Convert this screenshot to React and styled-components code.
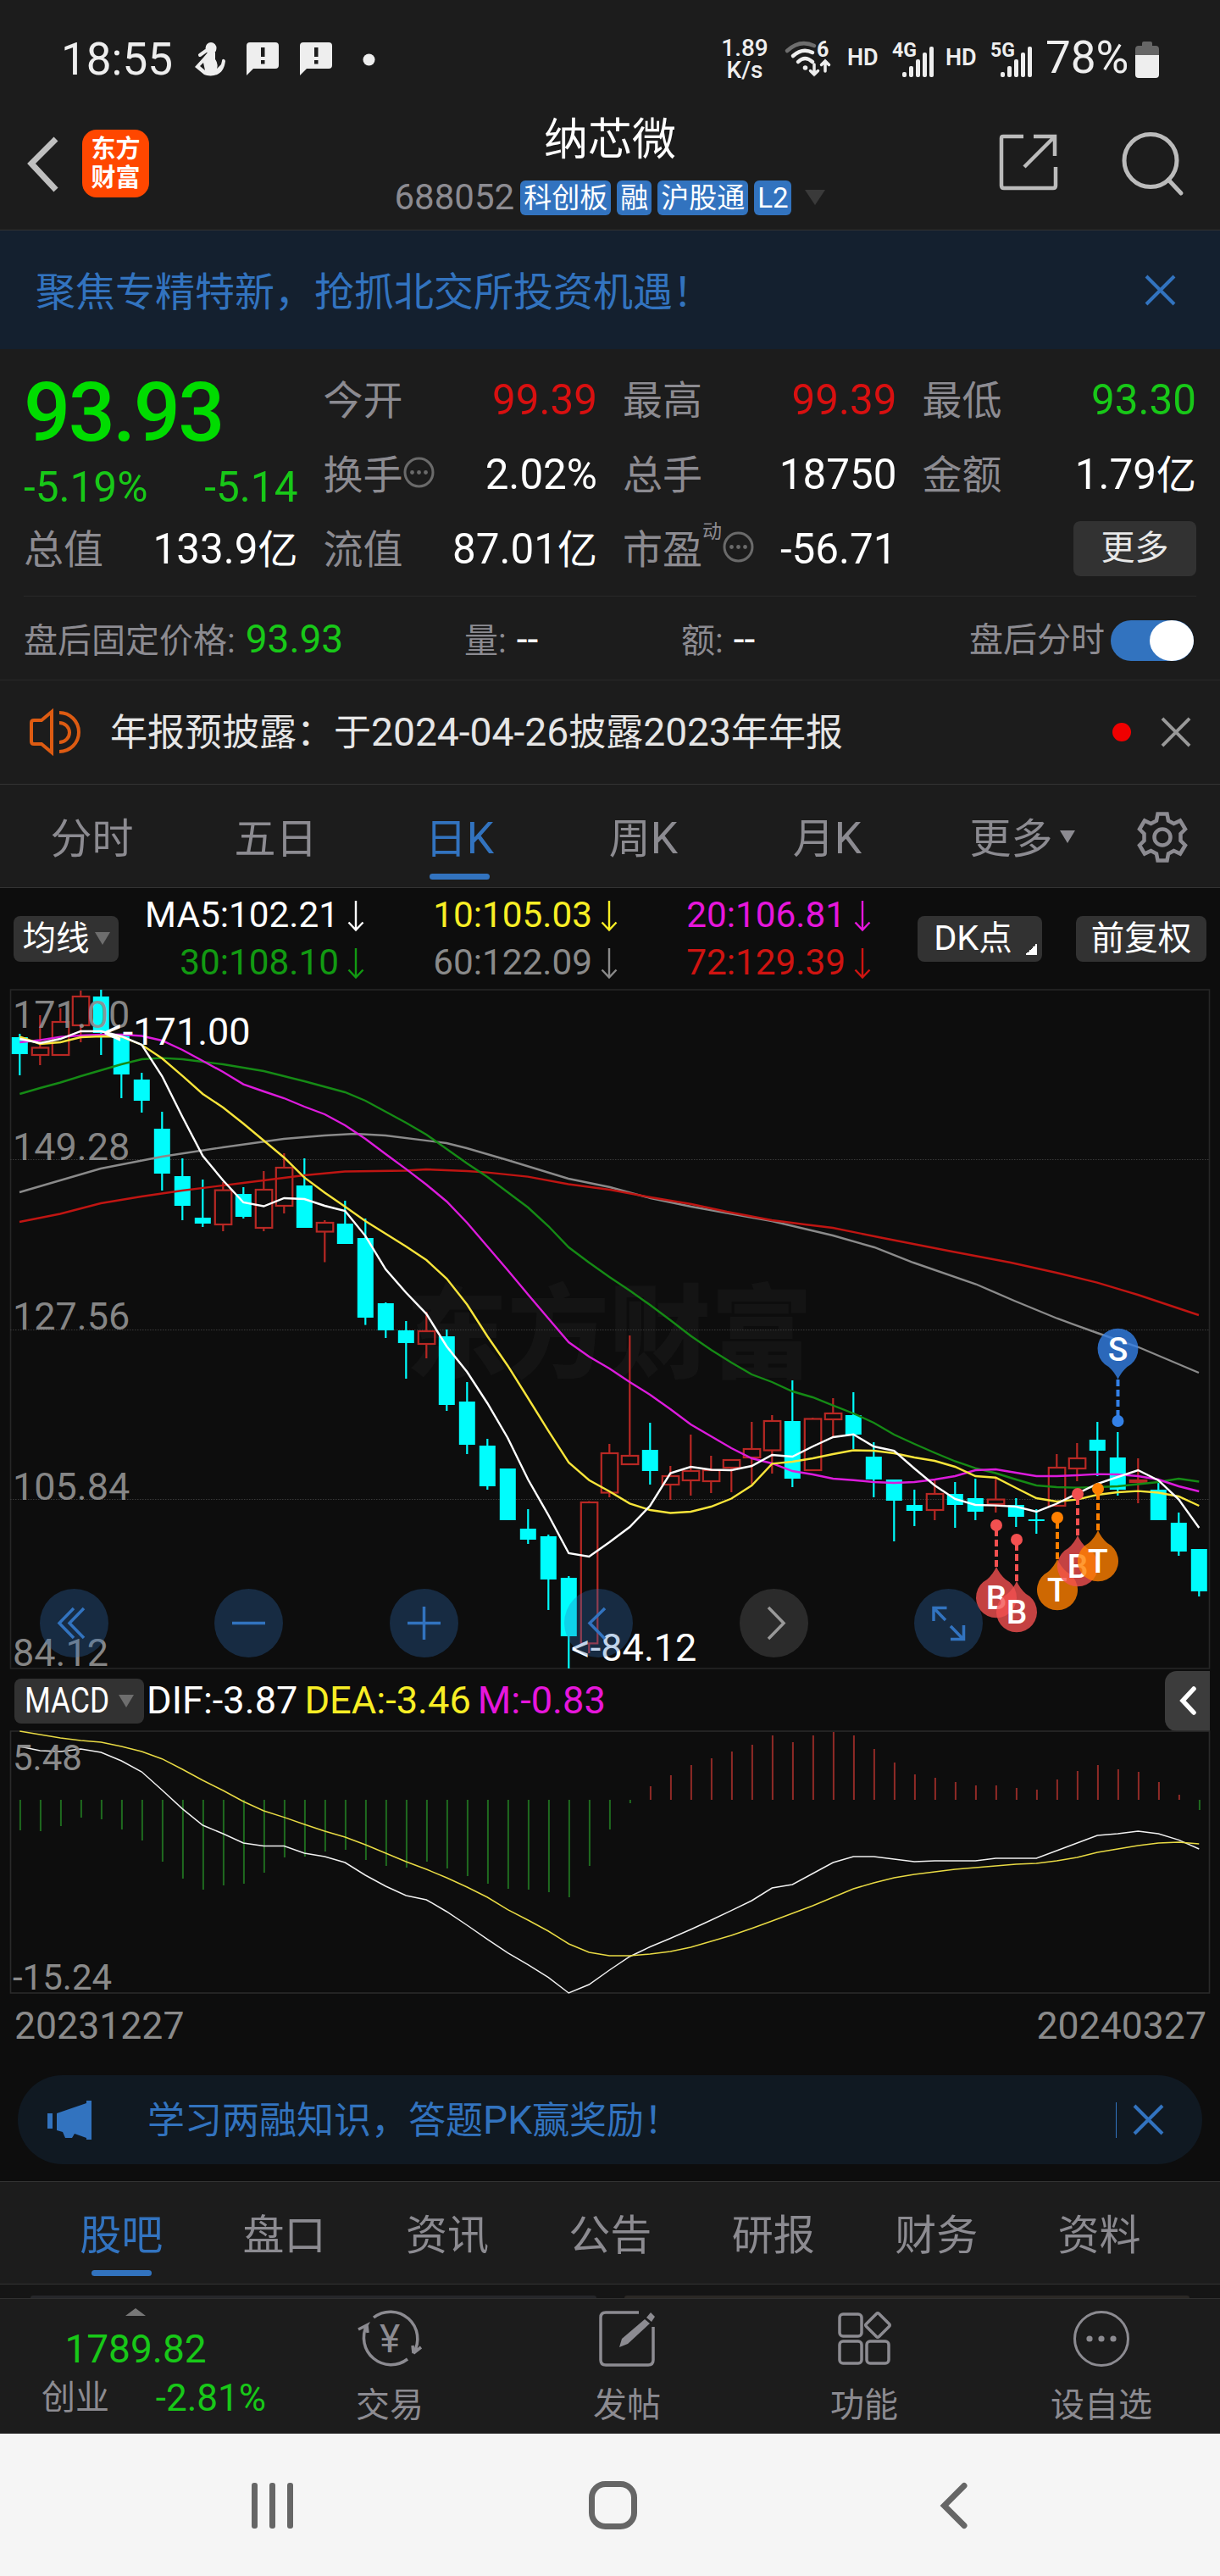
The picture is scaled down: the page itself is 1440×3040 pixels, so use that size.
import React, { useState } from "react";
import styled, { createGlobalStyle, css } from "styled-components";

const BLUE = "#3273bf";
const GREEN = "#18c818";
const RED = "#d81010";
const GREY = "#8c8b91";

const GlobalStyle = createGlobalStyle`
  * {
    box-sizing: border-box;
  }
  body {
    margin: 0;
    background: #0d0d0d;
    font-family: Roboto, "Noto Sans CJK SC", sans-serif;
    line-height: 1.2;
  }
  svg {
    display: block;
    flex: none;
    overflow: visible;
  }
`;

const Screen = styled.div`
  width: 1440px;
  height: 3040px;
  overflow: hidden;
  display: flex;
  flex-direction: column;
  background: #0d0d0d;
  color: #fff;
  white-space: nowrap;

  > * {
    flex-shrink: 0;
  }
`;

/* Latin runs are set slightly larger than the Chinese text beside them */
const Latin = styled.span`
  font-size: 1.05em;
  line-height: 1;
`;

const Mixed = ({ children }) =>
  String(children)
    .split(/([\x21-\x7e]+)/)
    .filter(Boolean)
    .map((part, i) =>
      /^[\x21-\x7e]/.test(part) ? <Latin key={i}>{part}</Latin> : part
    );

// ---------- status bar ----------

const StatusBar = styled.div`
  height: 136px;
  background: #1c1c1c;
  color: #eee;
  display: flex;
  align-items: center;
  justify-content: space-between;
  padding: 4px 72px 0 72px;
`;

const StatusGroup = styled.div`
  display: flex;
  align-items: center;
`;

const Clock = styled.div`
  width: 158px;
  font-size: 53px;
  line-height: 60px;
`;

const StatusSvg = styled.svg`
  margin-left: ${(props) => props.$gap || 0}px;
`;

const NetSpeed = styled.div`
  width: 60px;
  text-align: center;
  font-size: 28px;
  line-height: 26px;
  font-weight: 500;
`;

const Hd = styled.div`
  width: 37px;
  margin-left: ${(props) => props.$gap}px;
  font-size: 27px;
  line-height: 30px;
  font-weight: 600;
  padding-bottom: 4px;
`;

const Percent = styled.div`
  width: 106px;
  margin-left: 15px;
  font-size: 53px;
  line-height: 60px;
  padding-bottom: 4px;
`;

const Bubble = ({ gap }) => (
  <StatusSvg $gap={gap} width="38" height="40" viewBox="0 0 38 40">
    <path
      d="M4 0h30a4 4 0 0 1 4 4v23a4 4 0 0 1-4 4H8l-8 8V4a4 4 0 0 1 4-4z"
      fill="#eee"
    />
    <rect x="17" y="6" width="4.5" height="11" fill="#1c1c1c" />
    <rect x="17" y="21" width="4.5" height="4.5" fill="#1c1c1c" />
  </StatusSvg>
);

const Signal = ({ label, gap }) => (
  <StatusSvg $gap={gap} width="50" height="44" viewBox="0 0 50 44">
    <text
      x="0"
      y="19"
      fontSize="23"
      fontWeight="700"
      fill="#eee"
      textLength="29"
      lengthAdjust="spacingAndGlyphs"
    >
      {label}
    </text>
    {[37, 30, 22, 14, 7].map((top, i) => (
      <rect
        key={top}
        x={12 + i * 8}
        y={top}
        width="5"
        height={43 - top}
        rx="2"
        fill="#eee"
      />
    ))}
  </StatusSvg>
);

// ---------- header ----------

const Header = styled.div`
  height: 136px;
  background: #1c1c1c;
  border-bottom: 1.5px solid #333;
  display: flex;
  justify-content: space-between;
  padding: 0 42px 0 32px;
`;

const HeaderSide = styled.div`
  width: ${(props) => props.$width}px;
  display: flex;
  padding-top: ${(props) => props.$top}px;
  gap: ${(props) => props.$gap}px;
  justify-content: ${(props) => props.$align || "flex-start"};
`;

const Logo = styled.div`
  width: 79px;
  height: 80px;
  border-radius: 17px;
  background: #ff4700;
  font-size: 29px;
  line-height: 34px;
  font-weight: 700;
  text-align: center;
  padding-top: 6px;
`;

const TitleBlock = styled.div`
  display: flex;
  flex-direction: column;
  align-items: center;
`;

const StockName = styled.div`
  font-size: 52px;
  line-height: 60px;
`;

const CodeRow = styled.div`
  display: flex;
  align-items: center;
  gap: 7px;
  margin-top: 16px;
`;

const Code = styled.span`
  font-size: 42px;
  line-height: 42px;
  color: ${GREY};
`;

const Badge = styled.span`
  height: 41px;
  padding: 0 4px;
  border-radius: 6px;
  background: ${BLUE};
  font-size: 33px;
  line-height: 41px;
`;

const Triangle = styled.i`
  flex: none;
  width: 0;
  height: 0;
  margin-left: ${(props) => props.$gap || 0}px;
  border-left: ${(props) => props.$half}px solid transparent;
  border-right: ${(props) => props.$half}px solid transparent;
  ${(props) =>
    props.$up
      ? css`
          border-bottom: ${props.$h}px solid ${props.$color};
        `
      : css`
          border-top: ${props.$h}px solid ${props.$color};
        `}
`;

// ---------- banner ----------

const Banner = styled.div`
  height: 140px;
  background: #14202f;
  color: ${BLUE};
  display: flex;
  align-items: center;
  justify-content: space-between;
  padding: 0 52px 0 42px;
  font-size: 47px;
`;

const BannerText = styled.div`
  padding-top: 6px;
`;

const Cross = ({ size = 37, color, width = 4 }) => (
  <svg width={size} height={size} viewBox="0 0 37 37">
    <path
      d="M2 2l33 33M35 2L2 35"
      stroke={color}
      strokeWidth={width}
      fill="none"
    />
  </svg>
);

// ---------- quote ----------

const Quote = styled.div`
  height: 292px;
  background: #1c1c1c;
  padding: 17px 28px 0;
`;

const QuoteGrid = styled.div`
  height: 275px;
  display: grid;
  grid-template-columns: repeat(4, 1fr);
  grid-template-rows: repeat(3, 88px);
  column-gap: 30px;
  border-bottom: 1.5px solid #292929;
`;

const PriceBlock = styled.div`
  grid-row: 1 / 3;
  color: ${GREEN};
`;

const Price = styled.div`
  font-size: 97px;
  line-height: 116px;
  font-weight: 500;
  letter-spacing: -2.5px;
  color: #00dc00;
`;

const Change = styled.div`
  display: flex;
  justify-content: space-between;
  font-size: 49.5px;
  line-height: 60px;
`;

const Cell = styled.div`
  display: flex;
  align-items: center;
  justify-content: ${(props) => props.$align || "space-between"};
`;

const Label = styled.div`
  display: flex;
  align-items: center;
  font-size: 47px;
  color: ${GREY};
`;

const Value = styled.div`
  font-size: 47px;
  color: ${(props) => props.$color || "#fff"};
`;

const Dynamic = styled.span`
  align-self: flex-start;
  margin: -7px 1px 0 0;
  font-size: 23px;
`;

const MoreButton = styled.button`
  width: 145px;
  height: 65px;
  margin-bottom: 4px;
  padding: 0;
  border: 0;
  border-radius: 8px;
  background: #323232;
  color: #e8e8e8;
  font: inherit;
  font-size: 40px;
  line-height: 62px;
`;

const InfoDots = () => (
  <svg width="37" height="37" viewBox="0 3 37 37">
    <circle
      cx="18.5"
      cy="18.5"
      r="16.5"
      stroke="#6a6a6a"
      strokeWidth="3"
      fill="none"
    />
    <circle cx="10.5" cy="18.5" r="2.4" fill="#6a6a6a" />
    <circle cx="18.5" cy="18.5" r="2.4" fill="#6a6a6a" />
    <circle cx="26.5" cy="18.5" r="2.4" fill="#6a6a6a" />
  </svg>
);

// ---------- after hours and notice ----------

const AfterHours = styled.div`
  height: 99px;
  background: #1c1c1c;
  border-bottom: 1.5px solid #292929;
  display: grid;
  grid-template-columns: 520px 256px 1fr auto;
  align-items: center;
  padding: 6px 31px 0 28px;
  font-size: 40px;
  color: ${GREY};
`;

const Figure = styled.span`
  margin-left: 12px;
  font-size: 46px;
  line-height: 1;
  color: ${(props) => props.$color || "#fff"};
`;

const SwitchRow = styled.div`
  display: flex;
  align-items: center;
  gap: 7px;
`;

const Switch = styled.button`
  width: 98px;
  height: 48px;
  padding: 0;
  border: 0;
  border-radius: 24px;
  background: ${(props) => (props.$on ? BLUE : "#444")};
  display: flex;
  justify-content: ${(props) => (props.$on ? "flex-end" : "flex-start")};
`;

const Knob = styled.span`
  width: 52px;
  height: 48px;
  border-radius: 50%;
  background: #fff;
`;

const Notice = styled.div`
  height: 123px;
  background: #1c1c1c;
  border-bottom: 1.5px solid #333;
  display: flex;
  align-items: center;
  padding: 0 34px 0 34px;
`;

const NoticeText = styled.div`
  flex: 1;
  margin-left: 34px;
  padding-top: 2px;
  font-size: 44px;
  color: #e6e6e6;
`;

const RedDot = styled.span`
  width: 22px;
  height: 22px;
  margin-right: 35px;
  border-radius: 50%;
  background: #f00000;
`;

// ---------- tabs ----------

const Tabs = styled.div`
  height: 122px;
  background: #1c1c1c;
  border-bottom: 1.5px solid #333;
  ${(props) => props.$lined && "border-top: 1.5px solid #333;"}
  display: flex;
  padding-left: ${(props) => props.$pad || 0}px;
`;

const Tab = styled.div`
  width: ${(props) => props.$width}px;
  padding-top: ${(props) => props.$top}px;
  display: flex;
  flex-direction: column;
  align-items: center;
  font-size: 49px;
  line-height: 60px;
  color: ${(props) => (props.$active ? BLUE : GREY)};

  &::after {
    content: "";
    width: 71px;
    height: 7px;
    border-radius: 4px;
    margin-top: 10px;
    background: ${(props) => (props.$active ? BLUE : "transparent")};
  }
`;

const TabTail = styled.div`
  flex: 1;
  display: flex;
  align-items: center;
  justify-content: space-between;
  padding: 2px 38px 0 0;
`;

// ---------- indicator rows ----------

const MaRow = styled.div`
  height: 119px;
  display: flex;
  align-items: center;
  padding: 0 16px;
`;

const Chip = styled.button`
  flex: none;
  width: ${(props) => props.$width}px;
  height: ${(props) => props.$height || 54}px;
  padding: 0;
  border: 0;
  border-radius: 8px;
  background: #323232;
  color: #fff;
  font: inherit;
  font-size: 39.5px;
  line-height: 50px;
  display: flex;
  align-items: center;
  justify-content: center;
`;

const MaGrid = styled.div`
  display: grid;
  grid-template-columns: 290px 299px 299px;
  grid-auto-rows: 56px;
  padding-top: 2px;
`;

const MaItem = styled.div`
  display: flex;
  align-items: center;
  justify-content: flex-end;
  gap: 10px;
  font-size: 42.3px;
  color: ${(props) => props.color};
`;

const ChipGroup = styled.div`
  flex: 1;
  display: flex;
  justify-content: flex-end;
  gap: 40px;
`;

const Corner = styled.i`
  width: 14px;
  height: 14px;
  align-self: flex-end;
  margin: 0 -13px 8px 15px;
  background: linear-gradient(135deg, transparent 50%, #fff 50%);
`;

const ChartBox = styled.div`
  position: relative;
  height: ${(props) => props.$height}px;
`;

/* chart controls float over the candles */
const Controls = styled.div`
  position: absolute;
  left: 47px;
  right: 280px;
  bottom: 14px;
  display: flex;
  justify-content: space-between;
`;

const RoundButton = styled.button`
  width: 81px;
  height: 81px;
  padding: 0;
  border: 0;
  border-radius: 50%;
  background: ${(props) =>
    props.$muted ? "rgba(90, 90, 90, 0.4)" : "rgba(47, 112, 190, 0.3)"};
  display: flex;
  align-items: center;
  justify-content: center;
`;

const MacdRow = styled.div`
  height: 72px;
  display: flex;
  align-items: center;
  padding: 2px 12px 0 17px;
`;

const Squeezed = styled.span`
  font-size: 42px;
  width: 102px;
  transform: scaleX(0.84);
  transform-origin: 0 50%;
`;

const MacdValue = styled.span`
  margin-left: ${(props) => props.$gap}px;
  font-size: 45.2px;
  color: ${(props) => props.color};
`;

const Collapse = styled.button`
  width: 53px;
  height: 71px;
  margin-left: auto;
  padding: 0;
  border: 0;
  border-radius: 14px 0 0 14px;
  background: #3c3c3c;
  display: flex;
  align-items: center;
  justify-content: center;
`;

const Dates = styled.div`
  height: 96px;
  display: flex;
  justify-content: space-between;
  padding: 12px 16px 0 17px;
  font-size: 44.6px;
  line-height: 52px;
  color: #8a8a8a;
`;

const Promo = styled.div`
  height: 105px;
  margin: 0 21px 20px;
  border-radius: 53px;
  background: #101922;
  color: ${BLUE};
  display: flex;
  align-items: center;
  padding: 0 45px 0 34px;
  font-size: 44px;
`;

const PromoText = styled.div`
  flex: 1;
  margin-left: 64px;
  padding-top: 3px;
`;

const Divider = styled.i`
  width: 1.5px;
  height: 42px;
  margin-right: 19px;
  background: ${BLUE};
`;

const Peek = styled.div`
  height: 17px;
  background: #151515;
  border-bottom: 1.5px solid #303030;
  display: flex;
  align-items: flex-end;
  gap: 33px;
  padding: 0 36px;
`;

const PeekCard = styled.div`
  flex: 1;
  height: 3px;
  border-radius: 10px 10px 0 0;
  background: ${(props) => props.color};
`;

// ---------- bottom bars ----------

const BottomBar = styled.div`
  height: 159px;
  background: #1c1c1c;
  display: flex;
`;

const IndexBox = styled.div`
  width: 320px;
  display: flex;
  flex-direction: column;
  align-items: center;
  padding-top: 11px;
  color: ${GREEN};
`;

const IndexValue = styled.div`
  font-size: 46px;
  line-height: 54px;
  margin-top: 12px;
`;

const IndexRow = styled.div`
  width: 100%;
  display: flex;
  justify-content: space-between;
  align-items: center;
  padding: 0 6px 0 49px;
  margin-top: 5px;
  font-size: 44px;
  line-height: 52px;
`;

const IndexName = styled.span`
  font-size: 40px;
  color: ${GREY};
`;

const NavItem = styled.div`
  width: 280px;
  display: flex;
  flex-direction: column;
  align-items: center;
  padding-top: 9px;
  font-size: 40px;
  line-height: 50px;
  color: ${GREY};

  svg {
    margin-bottom: 16px;
  }
`;

const SystemBar = styled.div`
  height: 168px;
  background: #f5f5f5;
  display: flex;
  align-items: center;
  justify-content: space-between;
  padding: 2px 298px 0 297px;
`;

const HomeIcon = styled.svg`
  margin-right: 10px;
`;

// ---------- chart data ----------

// [up, body top, body bottom, high, low] in plot units
const CANDLES = [
  [0, 1224, 1244, 1220, 1269],
  [1, 1236.5, 1245, 1198, 1257],
  [1, 1206, 1245, 1190, 1245],
  [1, 1176, 1210, 1169, 1230],
  [0, 1176, 1219, 1168, 1245],
  [0, 1222, 1268, 1222, 1296],
  [0, 1274, 1299, 1266, 1313],
  [0, 1332, 1385, 1312, 1405],
  [0, 1388, 1423, 1367, 1440],
  [0, 1437, 1444, 1392, 1448],
  [1, 1404.6, 1445, 1395, 1453],
  [0, 1409, 1436, 1401, 1438],
  [1, 1404, 1449, 1382, 1453],
  [1, 1378, 1423, 1361, 1432],
  [0, 1399, 1449, 1367, 1449],
  [1, 1443, 1453.5, 1440, 1489.6],
  [0, 1444, 1468, 1417, 1468],
  [0, 1461, 1555, 1438, 1563.6],
  [0, 1538, 1570, 1537, 1579],
  [0, 1570, 1585, 1559, 1627],
  [1, 1571, 1586, 1548, 1603],
  [0, 1577, 1658, 1569, 1665],
  [0, 1654, 1705, 1631, 1716],
  [0, 1706, 1754, 1698, 1758],
  [0, 1733, 1794, 1733, 1794],
  [0, 1804, 1817, 1781, 1822],
  [0, 1813, 1864, 1811, 1900],
  [0, 1862, 1931, 1860, 1969],
  [1, 1773, 1939.4, 1771.5, 1951],
  [1, 1715, 1761.5, 1704, 1767],
  [1, 1718, 1728, 1576, 1728],
  [0, 1711, 1736, 1679, 1752],
  [1, 1742, 1752, 1730, 1770],
  [1, 1736, 1747, 1693, 1765],
  [1, 1735, 1748, 1718, 1762],
  [1, 1723, 1732, 1723, 1761],
  [1, 1710, 1720, 1678, 1751.5],
  [1, 1677, 1711.5, 1670, 1739],
  [0, 1677, 1745, 1629, 1755],
  [1, 1674.5, 1735, 1673, 1735],
  [1, 1668, 1675, 1650, 1695],
  [0, 1670, 1693, 1643, 1710],
  [0, 1719, 1746, 1702, 1767],
  [0, 1746, 1771, 1746, 1819],
  [0, 1776, 1783, 1758, 1801],
  [1, 1763, 1782, 1747, 1794],
  [0, 1763, 1776, 1749, 1803],
  [0, 1768, 1784, 1745, 1794],
  [1, 1769.6, 1775, 1744, 1785],
  [0, 1776, 1790, 1768, 1802],
  [0, 1793, 1795, 1781, 1810],
  [1, 1732, 1777, 1716, 1777],
  [1, 1721, 1733, 1703, 1748],
  [0, 1699, 1712, 1678, 1742],
  [0, 1720, 1758, 1690, 1765],
  [1, 1747, 1749, 1721, 1774],
  [0, 1758, 1794, 1750, 1794],
  [0, 1797, 1831, 1785, 1836],
  [0, 1828, 1878, 1828, 1884],
];

const MA5 = [
  1226, 1231, 1226, 1217, 1217, 1223, 1233, 1270, 1318, 1364, 1393, 1419,
  1423.5, 1414, 1415, 1423, 1429, 1458.6, 1498, 1525.5, 1550.6, 1589, 1619,
  1656, 1697, 1746, 1788, 1833, 1837, 1820, 1802, 1777, 1738.5, 1731, 1734.5,
  1735, 1730, 1717, 1719, 1707, 1696, 1692.7, 1707, 1712, 1733, 1753, 1769,
  1776, 1776.6, 1778, 1784, 1774.5, 1762.6, 1751, 1743, 1735, 1747, 1769.6,
  1803,
];

const MA10 = [
  1223.5, 1232, 1230, 1224, 1223, 1223.5, 1233, 1249, 1269.6, 1291, 1307, 1326,
  1346, 1366, 1389.6, 1407.5, 1424, 1441, 1456, 1471, 1487, 1509, 1539.5, 1577,
  1611.7, 1650, 1688.6, 1726, 1746.7, 1760, 1774.4, 1782, 1785.5, 1784, 1778,
  1768.5, 1753, 1727.4, 1725, 1721, 1716, 1711.5, 1712, 1715, 1720, 1724, 1731,
  1742, 1743.7, 1756, 1768, 1772, 1769.6, 1764, 1761, 1759.6, 1761.5, 1766,
  1777,
];

const MA20 = [
  1230, 1227.5, 1223.6, 1222, 1221, 1221, 1222.5, 1228, 1239, 1252, 1265,
  1279.6, 1288, 1296, 1306, 1315, 1328, 1344, 1362, 1379.6, 1398, 1418, 1443,
  1471, 1499, 1527.7, 1556, 1584, 1601, 1615, 1631, 1646, 1663, 1681, 1695,
  1709, 1721, 1727, 1736, 1740, 1745, 1746.7, 1749, 1750, 1749, 1746, 1742,
  1735, 1734, 1738, 1742, 1742, 1741, 1739.6, 1740, 1742, 1746, 1754, 1760,
];

const MA30 = [
  1291, 1284, 1277.5, 1270, 1263, 1256, 1250, 1248.6, 1250, 1253, 1256, 1260,
  1264, 1270, 1276, 1282.5, 1289, 1299, 1312, 1325, 1339, 1356, 1373, 1389,
  1407, 1425, 1447, 1472, 1490, 1507, 1523, 1540, 1558, 1576.5, 1593, 1608,
  1622, 1631, 1642, 1649, 1658.6, 1668, 1679, 1693, 1704, 1714.5, 1724.5,
  1732.6, 1738.5, 1746, 1753, 1755, 1755.6, 1755, 1754, 1751.5, 1749, 1745,
  1748.5,
];

const MA60 =
  "23,1407 119,1379 191,1365 263,1354 335,1344 383,1340 419,1338 455,1340 527,1349 551,1355 599,1369 671,1391 720,1401 768,1414 816,1424 911,1441 983,1458 1032,1472 1078,1490 1152,1515.5 1197,1535 1248,1556 1295,1573 1343,1589.5 1415,1620";

const MA72 =
  "23,1442 71,1432.5 119,1420 167,1412 215,1405 287,1396 359,1387 407,1382.5 479,1381.5 503,1380 551,1382 575,1383.6 623,1388.6 671,1397.5 720,1404 768,1413 816,1421 858,1430 911,1440 950,1445 983,1449 1037,1460 1124,1477 1193,1490 1247,1502 1295,1513.6 1343,1528 1415,1552";

const HIST = [
  2160, 2161, 2155, 2145, 2147, 2159, 2172, 2197, 2217, 2230, 2225, 2223, 2210,
  2192, 2191, 2185, 2183, 2195, 2202, 2204, 2197, 2205, 2214, 2223, 2229, 2230,
  2233, 2239, 2202, 2159, 2128, 2108, 2095, 2083, 2075, 2067, 2059, 2048, 2056,
  2048, 2044, 2048, 2064, 2080, 2094, 2098, 2103, 2107, 2107, 2110, 2112, 2100,
  2090, 2083, 2088, 2091, 2103, 2118, 2136,
];

const DIF = [
  2061, 2066, 2067, 2064, 2068, 2078, 2091, 2112.5, 2134.6, 2154, 2164, 2175,
  2178.6, 2178.6, 2187, 2191, 2198, 2213, 2226, 2237, 2242, 2256, 2272, 2288.6,
  2304.6, 2318.6, 2333.6, 2352, 2342, 2325, 2309, 2297.5, 2287.5, 2277, 2266,
  2254.6, 2243, 2228, 2224, 2211, 2198, 2191, 2191, 2194, 2197, 2196, 2196,
  2196, 2193, 2193, 2193, 2184, 2175, 2166, 2164, 2161, 2164, 2171.4, 2182,
];

const DEA = [
  2043, 2047, 2051, 2054, 2056, 2061, 2067, 2075.7, 2088, 2101, 2113, 2126,
  2137, 2144.6, 2153, 2161, 2168, 2177, 2187, 2197, 2206, 2216, 2227, 2239,
  2253.6, 2266, 2279, 2294, 2304, 2308, 2308, 2306, 2303, 2298, 2291, 2284,
  2275.7, 2267, 2258, 2249, 2239, 2229, 2222, 2216, 2212, 2209, 2206, 2204,
  2202, 2200, 2199, 2196, 2192, 2186, 2182, 2178, 2175, 2174, 2176,
];

// trade marks: x, dot y, pin centre y
const MARKS = [
  { text: "S", x: 1319.5, dot: 1677, cy: 1592, fill: "#3380e6" },
  { text: "B", x: 1176, dot: 1800, cy: 1885, fill: "#f25050" },
  { text: "B", x: 1200, dot: 1817, cy: 1902, fill: "#f25050" },
  { text: "T", x: 1248, dot: 1791, cy: 1876, fill: "#ff8000" },
  { text: "B", x: 1272, dot: 1763, cy: 1848, fill: "#f25050" },
  { text: "T", x: 1296, dot: 1757, cy: 1842, fill: "#ff8000" },
];

const xOf = (i) => 23.3 + i * 24;
const toPoints = (ys) => ys.map((y, i) => `${xOf(i)},${y}`).join(" ");

const Line = ({ points, color, width = 2.4 }) => (
  <polyline
    points={Array.isArray(points) ? toPoints(points) : points}
    fill="none"
    stroke={color}
    strokeWidth={width}
  />
);

const Candle = ({ data, x }) => {
  const [up, top, bottom, high, low] = data;
  if (up) {
    return (
      <g stroke="#b82824" strokeWidth="2.2" fill="none">
        <path d={`M${x} ${high}V${top}M${x} ${bottom}V${low}`} />
        <rect x={x - 9.5} y={top} width="19.5" height={bottom - top} />
      </g>
    );
  }
  return (
    <g fill="#00fdfd">
      <rect x={x - 1.1} y={high} width="2.2" height={low - high} />
      <rect x={x - 9.5} y={top} width="19" height={bottom - top} />
    </g>
  );
};

const Mark = ({ text, x, dot, cy, fill }) => {
  // pins above the dot point down, pins below it point up
  const dir = cy < dot ? 1 : -1;
  const tip = cy + dir * 36;
  return (
    <g>
      <circle cx={x} cy={dot} r="7" fill={fill} />
      <path
        d={`M${x} ${tip}V${dot}`}
        stroke={fill}
        strokeWidth="4"
        strokeDasharray="8 4"
      />
      <path
        d={`M${x} ${tip}q4 ${-dir * 9} 11 ${-dir * 15}A24 24 0 1 ${
          dir > 0 ? 0 : 1
        } ${x - 11} ${tip - dir * 15}q7 ${dir * 6} 11 ${dir * 15}z`}
        fill={fill}
        opacity="0.8"
      />
      <text
        x={x}
        y={cy + 14}
        fontSize="39"
        fontWeight="500"
        fill="#fff"
        textAnchor="middle"
      >
        {text}
      </text>
    </g>
  );
};

const AXIS = [
  ["171.00", 1213],
  ["149.28", 1369],
  ["127.56", 1569],
  ["105.84", 1770],
  ["84.12", 1966],
];

const KChart = () => (
  <svg width="1440" height="803" viewBox="0 1167 1440 803">
    <text
      x="479"
      y="1617"
      fontSize="120"
      fontWeight="900"
      fill="#141414"
    >
      东方财富
    </text>
    <rect
      x="12.5"
      y="1168"
      width="1415"
      height="801"
      fill="none"
      stroke="#262626"
      strokeWidth="1.6"
    />
    <path
      d="M12 1368.500H1428M12 1569.500H1428M12 1769.500H1428"
      stroke="#3a3a3a"
      strokeWidth="1"
      strokeDasharray="1.5 1.5"
    />
    {CANDLES.map((c, i) => (
      <Candle key={i} data={c} x={xOf(i)} />
    ))}
    <Line points={MA60} color="#8a8a8a" />
    <Line points={MA72} color="#bf1512" />
    <Line points={MA30} color="#158a15" />
    <Line points={MA20} color="#dc1bdc" />
    <Line points={MA10} color="#f7e43a" />
    <Line points={MA5} color="#fff" />
    {AXIS.map(([text, y]) => (
      <text key={text} x="15" y={y} fontSize="45" fill="#909090" opacity="0.92">
        {text}
      </text>
    ))}
    <text x="122" y="1233" fontSize="45" fill="#fff">
      &lt;-171.00
    </text>
    <text x="674" y="1959.500" fontSize="45" fill="#fff">
      &lt;-84.12
    </text>
    {MARKS.map((m, i) => (
      <Mark key={i} {...m} />
    ))}
  </svg>
);

const MacdChart = () => (
  <svg width="1440" height="311" viewBox="0 2042 1440 311">
    <rect
      x="12.5"
      y="2043"
      width="1415"
      height="309"
      fill="none"
      stroke="#2a2a2a"
      strokeWidth="1.6"
    />
    {HIST.map((y, i) => (
      <rect
        key={i}
        x={xOf(i) - 0.4}
        y={Math.min(y, 2124)}
        width="2"
        height={Math.abs(y - 2124)}
        fill={y > 2124 ? "#1f6a1f" : "#8f2a26"}
      />
    ))}
    <Line points={DIF} color="#f0f0f0" width={1.5} />
    <Line points={DEA} color="#e8da44" width={1.5} />
    <text x="15" y="2089" fontSize="42" fill="#8a8a8a">
      5.48
    </text>
    <text x="15" y="2348" fontSize="42" fill="#8a8a8a">
      -15.24
    </text>
  </svg>
);

const DownArrow = () => (
  <svg width="20" height="36" viewBox="0 0 20 36">
    <path
      d="M10 0v34M1.5 25.5L10 34.5l8.5-9"
      stroke="currentColor"
      strokeWidth="2.4"
      fill="none"
    />
  </svg>
);

const MA_ITEMS = [
  ["MA5:102.21", "#ffffff"],
  ["10:105.03", "#f8ee25"],
  ["20:106.81", "#e616dc"],
  ["30:108.10", "#129a12"],
  ["60:122.09", "#8a8a8a"],
  ["72:129.39", "#cf1411"],
];

const CONTROL_ICONS = [
  "M40 23L23 40.5 40 58M52 23L35 40.5 52 58",
  "M21 40.5h39",
  "M21 40.5h39M40.5 21v39",
  "M48 23L30 40.5 48 59",
  "M34 22l18 18.5-18 18.5",
  "M23 38V22.5h15.5M23.5 23L37 37M43 44L57 58.5M43 59.5h15.5V43",
];

const K_TABS = ["分时", "五日", "日K", "周K", "月K"];
const INFO_TABS = ["股吧", "盘口", "资讯", "公告", "研报", "财务", "资料"];

const App = () => {
  const [kTab, setKTab] = useState("日K");
  const [infoTab, setInfoTab] = useState("股吧");
  const [afterOn, setAfterOn] = useState(true);

  return (
    <Screen>
      <GlobalStyle />

      <StatusBar>
        <StatusGroup>
          <Clock>18:55</Clock>
          <svg width="36" height="40" viewBox="0 0 36 40" fill="#eee">
            <ellipse cx="19" cy="7" rx="6.5" ry="7" />
            <path d="M15 12h9v8q4 5 2 11l5-5 1-4c0-3 3-3 4 0-1 7-3 12-8 15-4 3-13 3-17 1L0 29l10-11z" />
            <path
              d="M6 15l7-5"
              stroke="#eee"
              strokeWidth="4"
              strokeLinecap="round"
            />
            <path d="M6 28l4-4 2 9z" fill="#1c1c1c" />
          </svg>
          <Bubble gap={25} />
          <Bubble gap={25} />
          <StatusSvg $gap={36} width="15" height="15" viewBox="0 0 15 15">
            <circle cx="7.5" cy="7.5" r="7" fill="#eee" />
          </StatusSvg>
        </StatusGroup>
        <StatusGroup>
          <NetSpeed>
            1.89
            <br />
            K/s
          </NetSpeed>
          <StatusSvg $gap={18} width="53" height="40" viewBox="0 0 53 40">
            <g fill="none" strokeWidth="4.5" strokeLinecap="round">
              <path d="M2 10Q17-4 34 4" stroke="#6e6e6e" />
              <path d="M9 16Q20 6 32 12" stroke="#eee" />
              <path d="M15 23Q23 15 32 23" stroke="#eee" />
              <path
                d="M34 26v12M29.5 33.5l4.5 4.5 4.5-4.5M47 34V22M42.5 26.5L47 22l4.5 4.5"
                stroke="#eee"
                strokeWidth="3.5"
              />
            </g>
            <circle cx="23.5" cy="30" r="2.8" fill="#eee" />
            <text x="37" y="17" fontSize="25" fontWeight="700" fill="#eee">
              6
            </text>
          </StatusSvg>
          <Hd $gap={20}>HD</Hd>
          <Signal label="4G" gap={16} />
          <Hd $gap={13}>HD</Hd>
          <Signal label="5G" gap={16} />
          <Percent>78%</Percent>
          <svg width="28" height="43" viewBox="0 0 28 43">
            <path
              d="M8 5V2q0-2 2-2h8q2 0 2 2v3h4q4 0 4 4v8H0V9q0-4 4-4z"
              fill="#666"
            />
            <path d="M0 16h28v23q0 4-4 4H4q-4 0-4-4z" fill="#eee" />
          </svg>
        </StatusGroup>
      </StatusBar>

      <Header>
        <HeaderSide $width={222} $top={17} $gap={28}>
          <svg width="37" height="80" viewBox="0 0 37 80">
            <path
              d="M34 11L5 40l29 31"
              fill="none"
              stroke="#bfbfbf"
              strokeWidth="7"
            />
          </svg>
          <Logo>
            东方
            <br />
            财富
          </Logo>
        </HeaderSide>
        <TitleBlock>
          <StockName>纳芯微</StockName>
          <CodeRow>
            <Code>688052</Code>
            <Badge>科创板</Badge>
            <Badge>融</Badge>
            <Badge>沪股通</Badge>
            <Badge>L2</Badge>
            <Triangle $half={12.5} $h={18} $gap={9} $color="#3a3a3a" />
          </CodeRow>
        </TitleBlock>
        <HeaderSide $width={212} $top={18} $gap={76} $align="flex-end">
          <svg width="69" height="76" viewBox="0 0 69 76">
            <path
              d="M29 7H5q-2 0-2 2v56q0 3 3 3h58q3 0 3-3V43M41 7h25v23M65 8L30 43"
              fill="none"
              stroke="#bbb"
              strokeWidth="4.5"
            />
          </svg>
          <svg width="74" height="80" viewBox="0 0 74 80">
            <circle
              cx="34"
              cy="35.5"
              r="31"
              fill="none"
              stroke="#bbb"
              strokeWidth="5"
            />
            <path
              d="M55 58l15 16"
              stroke="#bbb"
              strokeWidth="5"
              strokeLinecap="round"
            />
          </svg>
        </HeaderSide>
      </Header>

      <Banner>
        <BannerText>聚焦专精特新，抢抓北交所投资机遇！</BannerText>
        <Cross color={BLUE} />
      </Banner>

      <Quote>
        <QuoteGrid>
          <PriceBlock>
            <Price>93.93</Price>
            <Change>
              <span>-5.19%</span>
              <span>-5.14</span>
            </Change>
          </PriceBlock>
          <Cell>
            <Label>今开</Label>
            <Value $color={RED}>
              <Mixed>99.39</Mixed>
            </Value>
          </Cell>
          <Cell>
            <Label>最高</Label>
            <Value $color={RED}>
              <Mixed>99.39</Mixed>
            </Value>
          </Cell>
          <Cell>
            <Label>最低</Label>
            <Value $color={GREEN}>
              <Mixed>93.30</Mixed>
            </Value>
          </Cell>
          <Cell>
            <Label>
              换手
              <InfoDots />
            </Label>
            <Value>
              <Mixed>2.02%</Mixed>
            </Value>
          </Cell>
          <Cell>
            <Label>总手</Label>
            <Value>
              <Mixed>18750</Mixed>
            </Value>
          </Cell>
          <Cell>
            <Label>金额</Label>
            <Value>
              <Mixed>1.79亿</Mixed>
            </Value>
          </Cell>
          <Cell>
            <Label>总值</Label>
            <Value>
              <Mixed>133.9亿</Mixed>
            </Value>
          </Cell>
          <Cell>
            <Label>流值</Label>
            <Value>
              <Mixed>87.01亿</Mixed>
            </Value>
          </Cell>
          <Cell>
            <Label>
              市盈<Dynamic>动</Dynamic>
              <InfoDots />
            </Label>
            <Value>
              <Mixed>-56.71</Mixed>
            </Value>
          </Cell>
          <Cell $align="flex-end">
            <MoreButton>更多</MoreButton>
          </Cell>
        </QuoteGrid>
      </Quote>

      <AfterHours>
        <div>
          盘后固定价格:
          <Figure $color={GREEN}>93.93</Figure>
        </div>
        <div>
          量:<Figure>--</Figure>
        </div>
        <div>
          额:<Figure>--</Figure>
        </div>
        <SwitchRow>
          盘后分时
          <Switch $on={afterOn} onClick={() => setAfterOn(!afterOn)}>
            <Knob />
          </Switch>
        </SwitchRow>
      </AfterHours>

      <Notice>
        <svg width="62" height="54" viewBox="0 0 62 54">
          <g fill="none" stroke="#dd5b12" strokeWidth="4">
            <path d="M27 3v48L15 41H6q-3 0-3-3V16q0-3 3-3h9z" />
            <path d="M36 16a12 11.5 0 0 1 0 23M36 4a23 23 0 0 1 0 46" />
          </g>
        </svg>
        <NoticeText>
          <Mixed>年报预披露：于2024-04-26披露2023年年报</Mixed>
        </NoticeText>
        <RedDot />
        <Cross size={36} color="#999" />
      </Notice>

      <Tabs>
        {K_TABS.map((name) => (
          <Tab
            key={name}
            $width={217}
            $top={35}
            $active={name === kTab}
            onClick={() => setKTab(name)}
          >
            <span>
              <Mixed>{name}</Mixed>
            </span>
          </Tab>
        ))}
        <Tab $width={217} $top={35}>
          更多
        </Tab>
        <TabTail>
          <Triangle $half={9} $h={15} $gap={-51} $color={GREY} />
          <svg width="60" height="60" viewBox="0 0 60 60">
            <g fill="none" stroke={GREY} strokeWidth="4.5">
              <path d="M24.5 2.5h11l1.5 8 6.5 3.5 7.5-3.5 6 10-5.5 5.5v8l5.5 5.5-6 10-7.5-3.5-6.5 3.5-1.5 8h-11l-1.5-8-6.5-3.5-7.5 3.5-6-10L8.5 34v-8L3 20.5l6-10 7.5 3.5 6.5-3.5z" />
              <circle cx="30" cy="30" r="9.5" />
            </g>
          </svg>
        </TabTail>
      </Tabs>

      <MaRow>
        <Chip $width={124}>
          均线
          <Triangle $half={9} $h={15} $gap={6} $color="#6e6e6e" />
        </Chip>
        <MaGrid>
          {MA_ITEMS.map(([text, color]) => (
            <MaItem key={text} color={color}>
              {text}
              <DownArrow />
            </MaItem>
          ))}
        </MaGrid>
        <ChipGroup>
          <Chip $width={147}>
            <span>
              <Mixed>DK点</Mixed>
            </span>
            <Corner />
          </Chip>
          <Chip $width={154}>前复权</Chip>
        </ChipGroup>
      </MaRow>

      <ChartBox $height={803}>
        <KChart />
        <Controls>
          {CONTROL_ICONS.map((d, i) => (
            <RoundButton key={d} $muted={i === 4}>
              <svg width="81" height="81" viewBox="0 0 81 81">
                <path
                  d={d}
                  fill="none"
                  stroke={i === 4 ? "#999" : BLUE}
                  strokeWidth="3.5"
                />
              </svg>
            </RoundButton>
          ))}
        </Controls>
      </ChartBox>

      <MacdRow>
        <Chip $width={153} $height={53}>
          <Squeezed>MACD</Squeezed>
          <Triangle $half={9} $h={15} $gap={9} $color="#6e6e6e" />
        </Chip>
        <MacdValue $gap={3} color="#fff">
          DIF:-3.87
        </MacdValue>
        <MacdValue $gap={8} color="#f8ee25">
          DEA:-3.46
        </MacdValue>
        <MacdValue $gap={8} color="#e616dc">
          M:-0.83
        </MacdValue>
        <Collapse>
          <svg width="22" height="36" viewBox="0 0 22 36">
            <path
              d="M18 4L5 18l13 14"
              fill="none"
              stroke="#fff"
              strokeWidth="5.5"
              strokeLinecap="round"
            />
          </svg>
        </Collapse>
      </MacdRow>

      <ChartBox $height={311}>
        <MacdChart />
      </ChartBox>
      <Dates>
        <span>20231227</span>
        <span>20240327</span>
      </Dates>

      <Promo>
        <svg width="55" height="48" viewBox="0 0 55 48" fill={BLUE}>
          <path d="M1 16h6v18H1zM12 16L47 4V1h6v46h-6v-2l-14-5-3 5h-8l-3-7-7-2z" />
        </svg>
        <PromoText>
          <Mixed>学习两融知识，答题PK赢奖励！</Mixed>
        </PromoText>
        <Divider />
        <Cross color={BLUE} />
      </Promo>

      <Tabs $pad={47} $lined>
        {INFO_TABS.map((name) => (
          <Tab
            key={name}
            $width={192.4}
            $top={34}
            $active={name === infoTab}
            onClick={() => setInfoTab(name)}
          >
            {name}
          </Tab>
        ))}
      </Tabs>
      <Peek>
        <PeekCard color="#26272a" />
        <PeekCard color="#2b2825" />
      </Peek>

      <BottomBar>
        <IndexBox>
          <Triangle $up $half={12.5} $h={9} $color="#777" />
          <IndexValue>1789.82</IndexValue>
          <IndexRow>
            <IndexName>创业</IndexName>
            <span>-2.81%</span>
          </IndexRow>
        </IndexBox>
        <NavItem>
          <svg width="78" height="76" viewBox="0 0 78 76">
            <g fill="none" stroke={GREY} strokeWidth="3.5">
              <path d="M20 13A32 32 0 0 1 67 55L76 48M67 55l-1-9" />
              <path d="M60 62A32 32 0 0 1 12 22L2 27M12 22l1 9" />
            </g>
            <text x="39" y="54" fontSize="46" textAnchor="middle" fill={GREY}>
              ¥
            </text>
          </svg>
          交易
        </NavItem>
        <NavItem>
          <svg width="68" height="76" viewBox="0 0 68 76">
            <path
              d="M48 7H9q-6 0-6 6v50q0 6 6 6h50q6 0 6-6V24"
              fill="none"
              stroke={GREY}
              strokeWidth="3.5"
            />
            <path d="M25 48l3-10 27-23 6 5-26 24z" fill={GREY} />
            <path d="M57 13l5-6 5 5-4 6z" fill={GREY} />
          </svg>
          发帖
        </NavItem>
        <NavItem>
          <svg width="64" height="76" viewBox="0 0 64 76">
            <g fill="none" stroke={GREY} strokeWidth="3.5">
              <rect x="3" y="9" width="26" height="26" rx="4" />
              <rect x="3" y="41" width="26" height="26" rx="4" />
              <rect x="35" y="41" width="26" height="26" rx="4" />
              <path d="M46.5 8.500q1.5-1.5 3 0l12 12q1.5 1.5 0 3l-12 12q-1.500 1.500-3 0l-12-12q-1.500-1.500 0-3z" />
            </g>
          </svg>
          功能
        </NavItem>
        <NavItem>
          <svg width="68" height="76" viewBox="0 0 68 76">
            <circle
              cx="34"
              cy="38"
              r="31.5"
              fill="none"
              stroke={GREY}
              strokeWidth="3"
            />
            <circle cx="20" cy="38" r="3.6" fill={GREY} />
            <circle cx="34" cy="38" r="3.6" fill={GREY} />
            <circle cx="48" cy="38" r="3.6" fill={GREY} />
          </svg>
          设自选
        </NavItem>
      </BottomBar>

      <SystemBar>
        <svg width="50" height="54" viewBox="0 0 50 54" fill="#666">
          <rect x="0" y="0" width="7" height="54" rx="3" />
          <rect x="21" y="0" width="7" height="54" rx="3" />
          <rect x="42" y="0" width="7" height="54" rx="3" />
        </svg>
        <HomeIcon width="58" height="58" viewBox="0 0 58 58">
          <rect
            x="3.5"
            y="3.5"
            width="50"
            height="50"
            rx="16"
            fill="none"
            stroke="#666"
            strokeWidth="7"
          />
        </HomeIcon>
        <svg width="32" height="54" viewBox="0 0 32 54">
          <path
            d="M28 3.500L4.500 27 28 50.500"
            fill="none"
            stroke="#666"
            strokeWidth="7"
            strokeLinecap="round"
          />
        </svg>
      </SystemBar>
    </Screen>
  );
};

export default App;
